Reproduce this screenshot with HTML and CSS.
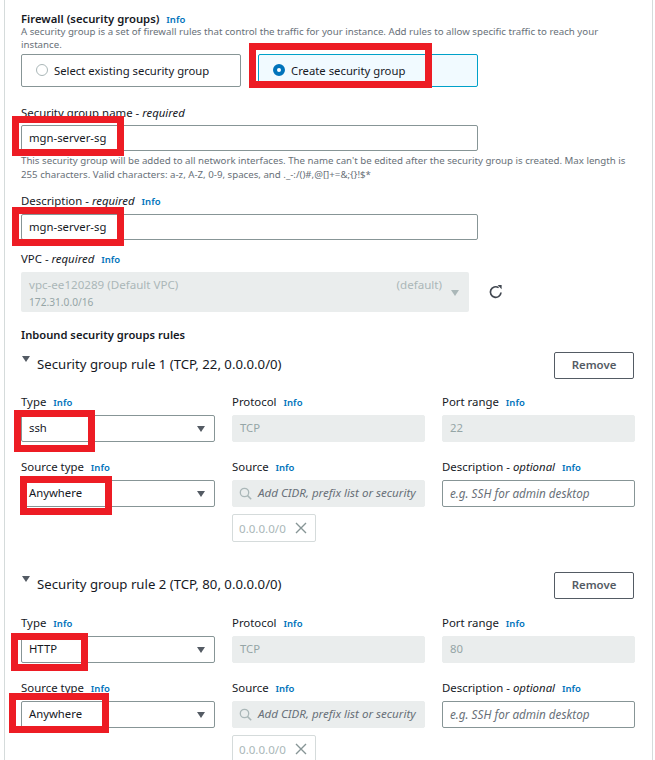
FILE: index.html
```html
<!DOCTYPE html>
<html lang="en">
  <head>
    <meta charset="UTF-8" />
    <title>Firewall (security groups)</title>
    <link rel="stylesheet" href="styles.css">
  </head>
  <body>
    <div class="panel">
      <!-- Firewall heading -->
      <div class="title">Firewall (security groups) <a href="#" class="info">Info</a></div>
      <p class="desc">A security group is a set of firewall rules that control the traffic for your instance. Add rules to allow specific traffic to reach your instance.</p>

      <div class="tiles">
        <div class="tile">
          <span class="radio"></span>
          Select existing security group
        </div>
        <div class="tile tile-on">
          <span class="radio radio-on"></span>
          Create security group
        </div>
      </div>

      <div class="field name-field">
        <label>Security group name - <i>required</i></label>
        <div class="box box-wide">mgn-server-sg</div>
      </div>
      <p class="hint">This security group will be added to all network interfaces. The name can't be edited after the security group is created. Max length is 255 characters. Valid characters: a-z, A-Z, 0-9, spaces, and ._-:/()#,@[]+=&amp;;{}!$*</p>

      <div class="field desc-field">
        <label>Description - <i>required</i> <a href="#" class="info">Info</a></label>
        <div class="box box-wide">mgn-server-sg</div>
      </div>

      <div class="field vpc-field">
        <label>VPC - <i>required</i> <a href="#" class="info">Info</a></label>
        <div class="vpc-row">
          <div class="vpc-select">
            <div class="vpc-text">
              <div class="vpc-line"><span>vpc-ee120289 (Default VPC)</span><span>(default)</span></div>
              <div class="vpc-cidr">172.31.0.0/16</div>
            </div>
            <svg class="arrow" width="8" height="6" viewBox="0 0 8 6"><path d="M0 0h8L4 6z" fill="#aab7b8"/></svg>
          </div>
          <svg class="refresh" width="16" height="16" viewBox="0 0 16 16">
            <path d="M13 8.5A5.3 5.3 0 1 1 10.6 3.6" fill="none" stroke="#414750" stroke-width="1.7"/>
            <path d="M9.6 1h4v4.2z" fill="#414750"/>
          </svg>
        </div>
      </div>

      <h4 class="inbound">Inbound security groups rules</h4>

      <!-- Rule 1 -->
      <div class="rule">
        <div class="rule-head">
          <div class="rule-title"><span class="caret"></span>Security group rule 1 (TCP, 22, 0.0.0.0/0)</div>
          <button class="remove">Remove</button>
        </div>
        <div class="rule-grid">
          <div class="cell">
            <label>Type <a href="#" class="info">Info</a></label>
            <div class="box box-select">ssh<svg class="arrow" width="8" height="6" viewBox="0 0 8 6"><path d="M0 0h8L4 6z" fill="#545b64"/></svg></div>
          </div>
          <div class="cell">
            <label>Protocol <a href="#" class="info">Info</a></label>
            <div class="box box-off">TCP</div>
          </div>
          <div class="cell">
            <label>Port range <a href="#" class="info">Info</a></label>
            <div class="box box-off">22</div>
          </div>
          <div class="cell">
            <label>Source type <a href="#" class="info">Info</a></label>
            <div class="box box-select">Anywhere<svg class="arrow" width="8" height="6" viewBox="0 0 8 6"><path d="M0 0h8L4 6z" fill="#545b64"/></svg></div>
          </div>
          <div class="cell">
            <label>Source <a href="#" class="info">Info</a></label>
            <div class="box box-off box-search">
              <svg class="search" width="13" height="13" viewBox="0 0 13 13"><circle cx="5.5" cy="5.5" r="4.2" fill="none" stroke="#aab7b8" stroke-width="1.3"/><path d="M8.6 8.6l3.6 3.6" stroke="#aab7b8" stroke-width="1.5"/></svg>
              <span class="search-text">Add CIDR, prefix list or security</span>
            </div>
            <div class="tag">0.0.0.0/0<svg width="12" height="12" viewBox="0 0 12 12"><path d="M1 1l10 10M11 1L1 11" stroke="#879596" stroke-width="1.4"/></svg></div>
          </div>
          <div class="cell">
            <label>Description - <i>optional</i> <a href="#" class="info">Info</a></label>
            <div class="box box-hint">e.g. SSH for admin desktop</div>
          </div>
        </div>
      </div>

      <!-- Rule 2 -->
      <div class="rule rule-two">
        <div class="rule-head">
          <div class="rule-title"><span class="caret"></span>Security group rule 2 (TCP, 80, 0.0.0.0/0)</div>
          <button class="remove">Remove</button>
        </div>
        <div class="rule-grid">
          <div class="cell">
            <label>Type <a href="#" class="info">Info</a></label>
            <div class="box box-select">HTTP<svg class="arrow" width="8" height="6" viewBox="0 0 8 6"><path d="M0 0h8L4 6z" fill="#545b64"/></svg></div>
          </div>
          <div class="cell">
            <label>Protocol <a href="#" class="info">Info</a></label>
            <div class="box box-off">TCP</div>
          </div>
          <div class="cell">
            <label>Port range <a href="#" class="info">Info</a></label>
            <div class="box box-off">80</div>
          </div>
          <div class="cell">
            <label>Source type <a href="#" class="info">Info</a></label>
            <div class="box box-select">Anywhere<svg class="arrow" width="8" height="6" viewBox="0 0 8 6"><path d="M0 0h8L4 6z" fill="#545b64"/></svg></div>
          </div>
          <div class="cell">
            <label>Source <a href="#" class="info">Info</a></label>
            <div class="box box-off box-search">
              <svg class="search" width="13" height="13" viewBox="0 0 13 13"><circle cx="5.5" cy="5.5" r="4.2" fill="none" stroke="#aab7b8" stroke-width="1.3"/><path d="M8.6 8.6l3.6 3.6" stroke="#aab7b8" stroke-width="1.5"/></svg>
              <span class="search-text">Add CIDR, prefix list or security</span>
            </div>
            <div class="tag">0.0.0.0/0<svg width="12" height="12" viewBox="0 0 12 12"><path d="M1 1l10 10M11 1L1 11" stroke="#879596" stroke-width="1.4"/></svg></div>
          </div>
          <div class="cell">
            <label>Description - <i>optional</i> <a href="#" class="info">Info</a></label>
            <div class="box box-hint">e.g. SSH for admin desktop</div>
          </div>
        </div>
      </div>

      <!-- Red annotation boxes drawn over the form -->
      <div class="mark mark-create"></div>
      <div class="mark mark-name"></div>
      <div class="mark mark-desc"></div>
      <div class="mark mark-ssh"></div>
      <div class="mark mark-any1"></div>
      <div class="mark mark-http"></div>
      <div class="mark mark-any2"></div>
    </div>
  </body>
</html>
```

FILE: styles.css
```css
html,
body {
  margin: 0;
  padding: 0;
  height: 760px;
  overflow: hidden;
  background: #fff;
}

body {
  font-family: "Noto Sans", Arial, sans-serif;
  font-size: 11.5px;
  color: #16191f;
}

.panel {
  position: relative;
  box-sizing: border-box;
  width: 649px;
  height: 760px;
  margin-left: 4px;
  padding: 13px 18px 0 16px;
  border-left: 1px solid #d5dbdb;
  border-right: 1px solid #d5dbdb;
  overflow: hidden;
}

a.info {
  color: #0073bb;
  font-size: 9.5px;
  font-style: normal;
  font-weight: 600;
  text-decoration: none;
  margin-left: 4px;
}

.title {
  font-size: 11.3px;
  font-weight: 600;
  line-height: 11px;
}

.desc {
  margin: 0;
  width: 600px;
  font-size: 9.7px;
  line-height: 13px;
  color: #687078;
}

.tiles {
  display: grid;
  grid-template-columns: 220px 220px;
  gap: 17px;
  margin-top: 3px;
}

.tile {
  display: flex;
  align-items: center;
  gap: 6px;
  box-sizing: border-box;
  height: 33px;
  padding: 0 0 1px 14px;
  border: 1px solid #879596;
  border-radius: 2px;
  font-size: 11.3px;
}

.tile-on {
  background: #f1faff;
  border-color: #00a1c9;
}

.radio {
  box-sizing: border-box;
  width: 12px;
  height: 12px;
  border: 1px solid #aab7b8;
  border-radius: 50%;
  background: #fff;
}

.radio-on {
  border: 4px solid #0073bb;
}

label {
  display: block;
  height: 16px;
  margin-bottom: 5px;
  font-size: 11.4px;
  line-height: 16px;
}

.name-field {
  width: 457px;
  margin-top: 18px;
}

.name-field label {
  margin-bottom: 4px;
}

.desc-field {
  width: 457px;
  margin-top: 11px;
}

.vpc-field {
  margin-top: 11px;
}

.box {
  display: flex;
  align-items: center;
  box-sizing: border-box;
  height: 27px;
  padding: 0 7px 2px;
  background: #fff;
  border: 1px solid #879596;
  border-radius: 2px;
  font-size: 11.3px;
}

.box-wide {
  height: 26px;
}

.hint {
  margin: 3px 0 0;
  font-size: 9.7px;
  line-height: 14px;
  color: #687078;
}

.vpc-row {
  display: flex;
  align-items: center;
  gap: 19px;
}

.vpc-select {
  display: flex;
  align-items: center;
  gap: 9px;
  box-sizing: border-box;
  width: 448px;
  height: 40px;
  padding: 1px 10px 0 8px;
  background: #eaeded;
  border-radius: 2px;
  color: #aab7b8;
}

.vpc-text {
  flex: 1;
}

.vpc-line {
  display: flex;
  justify-content: space-between;
  font-size: 11.6px;
  line-height: 16px;
}

.vpc-cidr {
  font-size: 10.2px;
  line-height: 14px;
  margin-top: 2px;
  color: #95a5a6;
}

.refresh {
  display: block;
}

.inbound {
  margin: 15px 0 0;
  font-size: 11.2px;
  font-weight: 600;
  line-height: 16px;
}

.rule {
  margin-top: 9px;
}

.rule-two {
  margin-top: 30px;
}

.rule-two .rule-grid {
  margin-top: 16px;
}

.rule-head {
  display: flex;
  justify-content: space-between;
  align-items: center;
  width: 613px;
}

.rule-title {
  position: relative;
  padding: 0 0 4px 16px;
  font-size: 13.2px;
  line-height: 16px;
}

.caret {
  position: absolute;
  left: 1px;
  top: 0;
  border-left: 4.5px solid transparent;
  border-right: 4.5px solid transparent;
  border-top: 6px solid #545b64;
}

.remove {
  box-sizing: border-box;
  width: 80px;
  height: 27px;
  padding: 0 0 2px;
  background: #fff;
  border: 1px solid #545b64;
  border-radius: 2px;
  color: #545b64;
  font-family: inherit;
  font-size: 11.4px;
  font-weight: 600;
}

.rule-grid {
  display: grid;
  grid-template-columns: 194px 193px 193px;
  column-gap: 17px;
  row-gap: 17px;
  margin-top: 15px;
}

.box-select {
  justify-content: space-between;
  padding-right: 9px;
}

.box-select .arrow {
  margin-top: 2px;
}

.box-off {
  background: #eaeded;
  border-color: #eaeded;
  color: #95a5a6;
}

.box-search {
  gap: 6px;
  padding-left: 6px;
  white-space: nowrap;
}

.search {
  flex: none;
  margin-top: 2px;
}

.search-text {
  font-size: 11.6px;
  font-style: italic;
  color: #687078;
}

.box-hint {
  font-size: 11.7px;
  font-style: italic;
  color: #687078;
}

.tag {
  display: flex;
  align-items: center;
  gap: 9px;
  box-sizing: border-box;
  width: 84px;
  height: 28px;
  margin-top: 7px;
  padding-left: 6px;
  border: 1px solid #d5dbdb;
  border-radius: 2px;
  font-size: 11.6px;
  color: #aab7b8;
}

.mark {
  position: absolute;
  box-sizing: border-box;
  border: 7px solid #ed1c24;
}

.mark-create {
  left: 244px;
  top: 43px;
  width: 183px;
  height: 45px;
}

.mark-name {
  left: 7px;
  top: 116px;
  width: 112px;
  height: 40px;
}

.mark-desc {
  left: 7px;
  top: 207px;
  width: 112px;
  height: 39px;
}

.mark-ssh {
  left: 9px;
  top: 410px;
  width: 81px;
  height: 42px;
}

.mark-any1 {
  left: 15px;
  top: 476px;
  width: 92px;
  height: 39px;
}

.mark-http {
  left: 6px;
  top: 633px;
  width: 77px;
  height: 38px;
}

.mark-any2 {
  left: 4px;
  top: 693px;
  width: 100px;
  height: 40px;
}
```
